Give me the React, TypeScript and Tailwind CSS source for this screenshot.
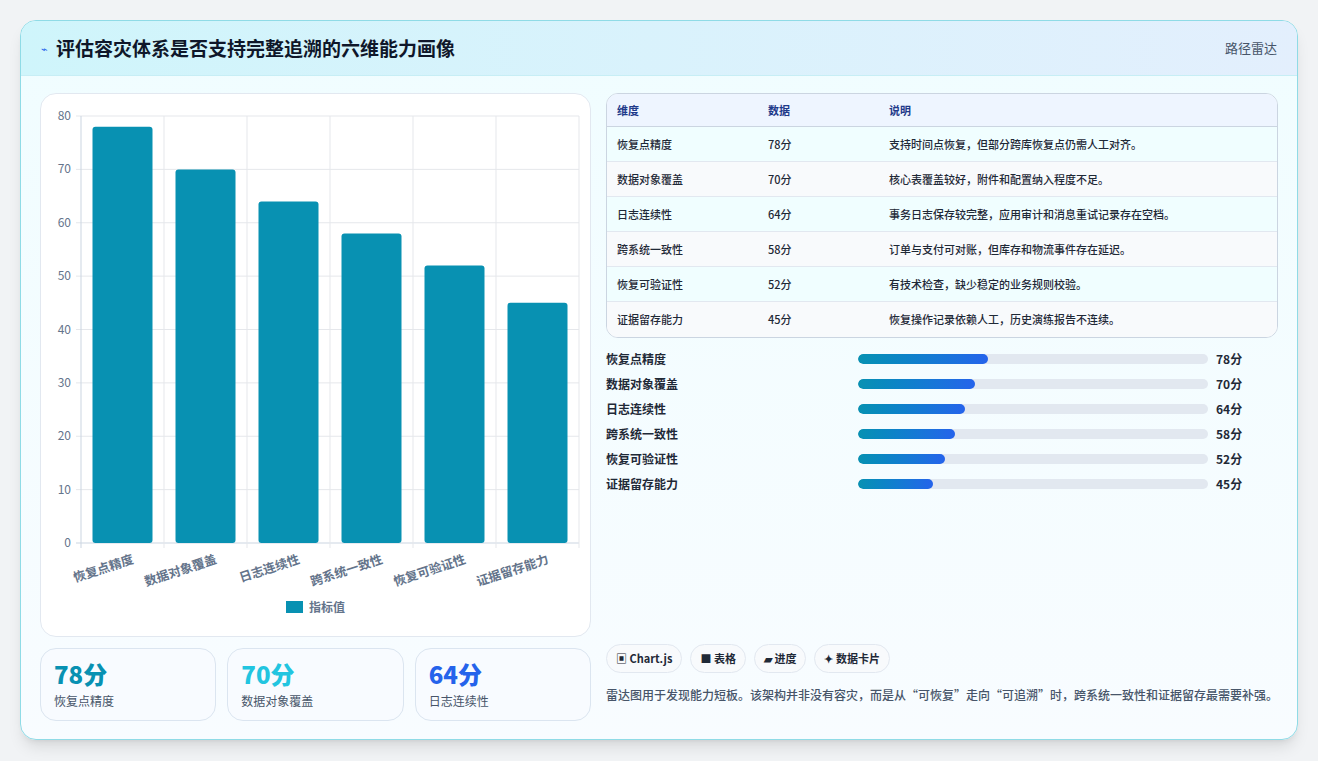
import React from "react";

const data = [
  { n: "恢复点精度", v: 78, d: "支持时间点恢复，但部分跨库恢复点仍需人工对齐。" },
  { n: "数据对象覆盖", v: 70, d: "核心表覆盖较好，附件和配置纳入程度不足。" },
  { n: "日志连续性", v: 64, d: "事务日志保存较完整，应用审计和消息重试记录存在空档。" },
  { n: "跨系统一致性", v: 58, d: "订单与支付可对账，但库存和物流事件存在延迟。" },
  { n: "恢复可验证性", v: 52, d: "有技术检查，缺少稳定的业务规则校验。" },
  { n: "证据留存能力", v: 45, d: "恢复操作记录依赖人工，历史演练报告不连续。" },
];

const font = { fontFamily: '"Noto Sans CJK SC", "Noto Sans", sans-serif' };

function Chart() {
  const x0 = 40, x1 = 538, yTop = 22, yBot = 449;
  const cw = (x1 - x0) / 6;
  const sc = (yBot - yTop) / 80;
  return (
    <svg width="550" height="542" viewBox="0 0 550 542" style={font}>
      {[0, 10, 20, 30, 40, 50, 60, 70, 80].map((t) => {
        const y = yBot - t * sc;
        return (
          <g key={t}>
            <line x1={x0 - 5} x2={x1} y1={y} y2={y} stroke={t === 0 ? "#cbd5e1" : "#e5e7eb"} />
            <text x={x0 - 10} y={y + 4} textAnchor="end" fontSize="12" fill="#64748b">{t}</text>
          </g>
        );
      })}
      {Array.from({ length: 7 }).map((_, i) => (
        <line key={i} x1={x0 + i * cw} x2={x0 + i * cw} y1={yTop} y2={yBot + 5} stroke={i === 0 ? "#cbd5e1" : "#e5e7eb"} />
      ))}
      {data.map((d, i) => {
        const cx = x0 + cw * (i + 0.5);
        const h = d.v * sc;
        return (
          <g key={d.n}>
            <rect x={cx - 30} y={yBot - h} width="60" height={h} rx="3" fill="#0891b2" />
            <text x={cx + 12} y={yBot + 20} textAnchor="end" fontSize="12.5" fontWeight="600" fill="#64748b" transform={`rotate(-18 ${cx + 12} ${yBot + 20})`}>{d.n}</text>
          </g>
        );
      })}
      <rect x="245" y="507" width="17" height="12" fill="#0891b2" />
      <text x="268" y="518" fontSize="12" fill="#64748b" fontWeight="600">指标值</text>
    </svg>
  );
}

export default function App() {
  return (
    <div className="w-[1318px] h-[761px] bg-[#f1f3f5] pt-5 pl-5" style={font}>
      <div className="w-[1278px] h-[720px] rounded-2xl border border-[#8fdbe6] bg-gradient-to-b from-[#f0fdff] to-[#f8fcff] overflow-hidden shadow-lg flex flex-col">
        <div className="h-[55px] flex items-center justify-between px-5 bg-gradient-to-r from-[#cff5fb] to-[#e3effd] border-b border-[#c7eef5]">
          <div className="flex items-center gap-2">
            <span className="text-[#2563eb] text-[11px]">⌁</span>
            <span className="text-[19px] font-bold text-[#0f172a]">评估容灾体系是否支持完整追溯的六维能力画像</span>
          </div>
          <span className="text-[13px] text-[#475569]">路径雷达</span>
        </div>
        <div className="flex gap-[15px] px-[19px] pt-[17px]">
          <div className="w-[551px] flex flex-col gap-[11px]">
            <div className="h-[544px] rounded-2xl border border-[#e2e8f0] bg-white">
              <Chart />
            </div>
            <div className="grid grid-cols-3 gap-[11px]">
              {[
                ["78分", "恢复点精度", "text-[#0891b2]"],
                ["70分", "数据对象覆盖", "text-[#22c5e0]"],
                ["64分", "日志连续性", "text-[#2563eb]"],
              ].map(([v, n, c]) => (
                <div key={n} className="h-[73px] rounded-2xl border border-[#dbe5f0] bg-[#f8fbff] px-[13px] pt-[10px]">
                  <div className={`text-[24px] font-extrabold leading-[30px] ${c}`}>{v}</div>
                  <div className="text-[12px] text-[#475569] mt-[3px]">{n}</div>
                </div>
              ))}
            </div>
          </div>
          <div className="flex-1 flex flex-col">
            <div className="rounded-xl border border-[#cbd5e1] overflow-hidden bg-white">
              <div className="h-[33px] flex items-center bg-[#eef5ff] border-b border-[#cbd5e1] text-[11px] font-semibold text-[#1e3a8a]">
                <div className="w-[161px] pl-[10px]">维度</div>
                <div className="w-[121px]">数据</div>
                <div>说明</div>
              </div>
              {data.map((d, i) => (
                <div key={d.n} className={`h-[35px] flex items-center text-[11px] text-[#1f2937] font-medium ${i < 5 ? "border-b border-[#e2e8f0]" : ""} ${i % 2 ? "bg-[#f8fafc]" : "bg-[#f0feff]"}`}>
                  <div className="w-[161px] pl-[10px]">{d.n}</div>
                  <div className="w-[121px]">{d.v}分</div>
                  <div>{d.d}</div>
                </div>
              ))}
            </div>
            <div className="mt-[8px] flex flex-col">
              {data.map((d) => (
                <div key={d.n} className="h-[25px] flex items-center text-[12px] font-semibold text-[#1f2937]">
                  <div className="w-[252px]">{d.n}</div>
                  <div className="w-[350px] h-[10px] rounded-full bg-[#e2e8f0] overflow-hidden">
                    <div className="h-full rounded-full bg-gradient-to-r from-[#0891b2] to-[#2563eb]" style={{ width: `${d.v / 2.1}%` }} />
                  </div>
                  <div className="ml-[8px] font-bold">{d.v}分</div>
                </div>
              ))}
            </div>
            <div className="mt-[148px] flex gap-[8px]">
              {["▣ Chart.js", "■ 表格", "▰ 进度", "✦ 数据卡片"].map((t) => (
                <div key={t} className="h-[29px] px-[9px] flex items-center rounded-full border border-[#e2e8f0] bg-[#f8fafc] text-[11px] font-semibold text-[#1f2937]">{t}</div>
              ))}
            </div>
            <p className="mt-[11px] text-[12px] leading-[21px] text-[#475569] font-medium">
              雷达图用于发现能力短板。该架构并非没有容灾，而是从“可恢复”走向“可追溯”时，跨系统一致性和证据留存最需要补强。
            </p>
          </div>
        </div>
      </div>
    </div>
  );
}
